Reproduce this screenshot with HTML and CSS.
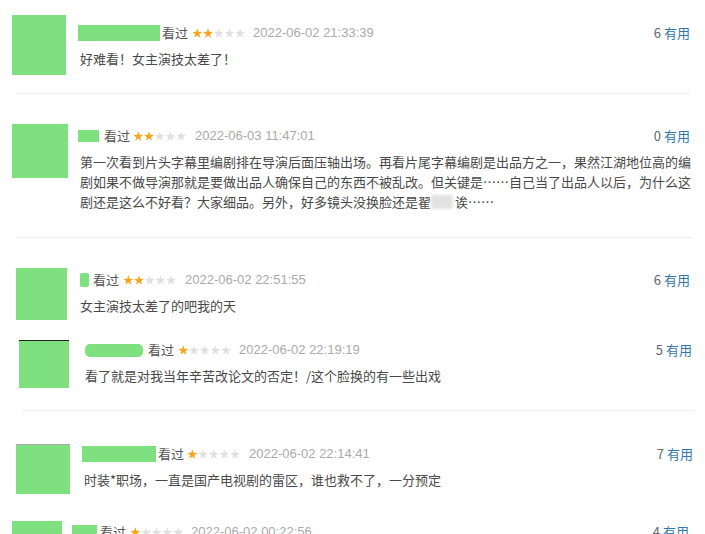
FILE: index.html
```html
<!DOCTYPE html>
<html lang="zh-CN">
<head>
    <meta charset="UTF-8">
    <meta name="viewport" content="width=device-width, initial-scale=1.0">
    <title>短评</title>
    <link rel="stylesheet" href="styles.css">
</head>
<body>
    <svg class="defs" width="0" height="0">
        <symbol id="star" viewBox="0 0 10.6 10">
            <polygon points="5.3,0.3 6.53,3.8 10.25,3.89 7.3,6.15 8.36,9.71 5.3,7.6 2.24,9.71 3.3,6.15 0.35,3.89 4.07,3.8"/>
        </symbol>
    </svg>

    <div class="list">
        <div class="comment c1">
            <div class="avatar"></div>
            <div class="body">
                <div class="head">
                    <span class="name"></span>
                    <span class="seen">看过</span>
                    <svg class="stars" width="54" height="11" viewBox="0 0 54 11">
                        <use href="#star" class="on" x="0" width="10.6" height="10"/>
                        <use href="#star" class="on" x="10.7" width="10.6" height="10"/>
                        <use href="#star" class="off" x="21.4" width="10.6" height="10"/>
                        <use href="#star" class="off" x="32.1" width="10.6" height="10"/>
                        <use href="#star" class="off" x="42.8" width="10.6" height="10"/>
                    </svg>
                    <span class="date">2022-06-02 21:33:39</span>
                    <span class="vote">6 <a href="#">有用</a></span>
                </div>
                <p class="text">好难看！女主演技太差了！</p>
            </div>
        </div>
        <div class="sep s1"></div>

        <div class="comment c2">
            <div class="avatar"></div>
            <div class="body">
                <div class="head">
                    <span class="name"></span>
                    <span class="seen">看过</span>
                    <svg class="stars" width="54" height="11" viewBox="0 0 54 11">
                        <use href="#star" class="on" x="0" width="10.6" height="10"/>
                        <use href="#star" class="on" x="10.7" width="10.6" height="10"/>
                        <use href="#star" class="off" x="21.4" width="10.6" height="10"/>
                        <use href="#star" class="off" x="32.1" width="10.6" height="10"/>
                        <use href="#star" class="off" x="42.8" width="10.6" height="10"/>
                    </svg>
                    <span class="date">2022-06-03 11:47:01</span>
                    <span class="vote">0 <a href="#">有用</a></span>
                </div>
                <p class="text">第一次看到片头字幕里编剧排在导演后面压轴出场。再看片尾字幕编剧是出品方之一，果然江湖地位高的编剧如果不做导演那就是要做出品人确保自己的东西不被乱改。但关键是……自己当了出品人以后，为什么这剧还是这么不好看？大家细品。另外，好多镜头没换脸还是翟<span class="blur"></span>诶……</p>
            </div>
        </div>
        <div class="sep s2"></div>

        <div class="comment c3">
            <div class="avatar"></div>
            <div class="body">
                <div class="head">
                    <span class="name"></span>
                    <span class="seen">看过</span>
                    <svg class="stars" width="54" height="11" viewBox="0 0 54 11">
                        <use href="#star" class="on" x="0" width="10.6" height="10"/>
                        <use href="#star" class="on" x="10.7" width="10.6" height="10"/>
                        <use href="#star" class="off" x="21.4" width="10.6" height="10"/>
                        <use href="#star" class="off" x="32.1" width="10.6" height="10"/>
                        <use href="#star" class="off" x="42.8" width="10.6" height="10"/>
                    </svg>
                    <span class="date">2022-06-02 22:51:55</span>
                    <span class="vote">6 <a href="#">有用</a></span>
                </div>
                <p class="text">女主演技太差了的吧我的天</p>
            </div>
        </div>

        <div class="comment c4">
            <div class="avatar"></div>
            <div class="body">
                <div class="head">
                    <span class="name"></span>
                    <span class="seen">看过</span>
                    <svg class="stars" width="54" height="11" viewBox="0 0 54 11">
                        <use href="#star" class="on" x="0" width="10.6" height="10"/>
                        <use href="#star" class="off" x="10.7" width="10.6" height="10"/>
                        <use href="#star" class="off" x="21.4" width="10.6" height="10"/>
                        <use href="#star" class="off" x="32.1" width="10.6" height="10"/>
                        <use href="#star" class="off" x="42.8" width="10.6" height="10"/>
                    </svg>
                    <span class="date">2022-06-02 22:19:19</span>
                    <span class="vote">5 <a href="#">有用</a></span>
                </div>
                <p class="text">看了就是对我当年辛苦改论文的否定！/这个脸换的有一些出戏</p>
            </div>
        </div>
        <div class="sep s4"></div>

        <div class="comment c5">
            <div class="avatar"></div>
            <div class="body">
                <div class="head">
                    <span class="name"></span>
                    <span class="seen">看过</span>
                    <svg class="stars" width="54" height="11" viewBox="0 0 54 11">
                        <use href="#star" class="on" x="0" width="10.6" height="10"/>
                        <use href="#star" class="off" x="10.7" width="10.6" height="10"/>
                        <use href="#star" class="off" x="21.4" width="10.6" height="10"/>
                        <use href="#star" class="off" x="32.1" width="10.6" height="10"/>
                        <use href="#star" class="off" x="42.8" width="10.6" height="10"/>
                    </svg>
                    <span class="date">2022-06-02 22:14:41</span>
                    <span class="vote">7 <a href="#">有用</a></span>
                </div>
                <p class="text">时装*职场，一直是国产电视剧的雷区，谁也救不了，一分预定</p>
            </div>
        </div>

        <div class="comment c6">
            <div class="avatar"></div>
            <div class="body">
                <div class="head">
                    <span class="name"></span>
                    <span class="seen">看过</span>
                    <svg class="stars" width="54" height="11" viewBox="0 0 54 11">
                        <use href="#star" class="on" x="0" width="10.6" height="10"/>
                        <use href="#star" class="off" x="10.7" width="10.6" height="10"/>
                        <use href="#star" class="off" x="21.4" width="10.6" height="10"/>
                        <use href="#star" class="off" x="32.1" width="10.6" height="10"/>
                        <use href="#star" class="off" x="42.8" width="10.6" height="10"/>
                    </svg>
                    <span class="date">2022-06-02 00:22:56</span>
                    <span class="vote">4 <a href="#">有用</a></span>
                </div>
                <p class="text">&nbsp;</p>
            </div>
        </div>
    </div>
</body>
</html>
```

FILE: styles.css
```css
body {
    margin: 0;
    background: #fff;
    font-family: "Noto Sans CJK SC", sans-serif;
    font-size: 13px;
    color: #494949;
}
.defs {
    position: absolute;
    width: 0;
    height: 0;
}
.list {
    width: 705px;
    height: 534px;
    overflow: hidden;
}
.comment {
    display: flex;
    align-items: flex-start;
}
.avatar {
    flex: none;
    box-sizing: border-box;
    background: #7fe07f;
}
.body {
    flex: 1;
    min-width: 0;
}
.head {
    display: flex;
    align-items: center;
    height: 20px;
    line-height: 20px;
    white-space: nowrap;
}
.name {
    display: block;
    background: #7fe07f;
}
.seen {
    color: #555;
}
.stars {
    display: block;
    margin-left: 4px;
}
.stars .on {
    fill: #f8a51e;
}
.stars .off {
    fill: #e0e0e0;
}
.date {
    margin-left: 7px;
    color: #aaa;
    font-family: "Liberation Sans", Arial, sans-serif;
    font-size: 13px;
}
.vote {
    margin-left: auto;
    color: #666;
}
.vote a {
    color: #37a;
    text-decoration: none;
}
.text {
    margin: 6px 0 0;
    line-height: 20px;
}
.blur {
    display: inline-block;
    width: 22px;
    height: 14px;
    margin-right: 2px;
    vertical-align: -2px;
    background: #e2e2e2;
    filter: blur(1.5px);
}
.sep {
    height: 1px;
    background: #eee;
}

/* item 1 */
.c1 { padding: 15px 15px 18px 12px; }
.c1 .avatar { width: 54px; height: 60px; }
.c1 .body { margin-left: 12px; }
.c1 .head { margin-top: 8px; }
.c1 .name { width: 82px; height: 16px; margin-right: 2px; }
.c1 .text { padding-left: 2px; }
.s1 { margin: 0 15px 0 18px; }

/* item 2 */
.c2 { padding: 30px 13px 25px 12px; }
.c2 .avatar { width: 56px; height: 54px; }
.c2 .body { margin-left: 10px; }
.c2 .head { margin-top: 2px; }
.c2 .name { width: 21px; height: 12px; margin-right: 5px; }
.c2 .seen + .stars { margin-left: 3px; }
.c2 .date { margin-left: 8px; }
.c2 .vote { margin-right: 2px; }
.c2 .text { padding-left: 2px; }
.s2 { margin: 0 13px 0 18px; }

/* item 3 */
.c3 { padding: 30px 15px 0 16px; }
.c3 .avatar { width: 51px; height: 52px; }
.c3 .body { margin-left: 13px; }
.c3 .head { margin-top: 2px; }
.c3 .name { width: 9px; height: 14px; margin-right: 4px; border-radius: 2px; }
.c3 .date { margin-left: 8px; }

/* item 4 */
.c4 { padding: 20px 13px 22px 19px; }
.c4 .avatar { width: 50px; height: 48px; border-top: 1px solid #222; }
.c4 .body { margin-left: 16px; }
.c4 .name { width: 58px; height: 13px; margin-right: 5px; border-radius: 5px; }
.s4 { margin: 0 12px 0 22px; }

/* item 5 */
.c5 { padding: 33px 12px 27px 16px; }
.c5 .avatar { width: 54px; height: 50px; border-top: 1px solid #aaa; }
.c5 .body { margin-left: 12px; }
.c5 .name { width: 74px; height: 16px; margin-right: 2px; }
.c5 .seen + .stars { margin-left: 3px; }
.c5 .date { margin-left: 8px; }
.c5 .text { padding-left: 2px; }

/* item 6 */
.c6 { padding: 0 16px 0 12px; }
.c6 .avatar { width: 50px; height: 50px; }
.c6 .body { margin-left: 10px; }
.c6 .head { margin-top: 1px; }
.c6 .name { width: 25px; height: 14px; margin-right: 3px; }
```
